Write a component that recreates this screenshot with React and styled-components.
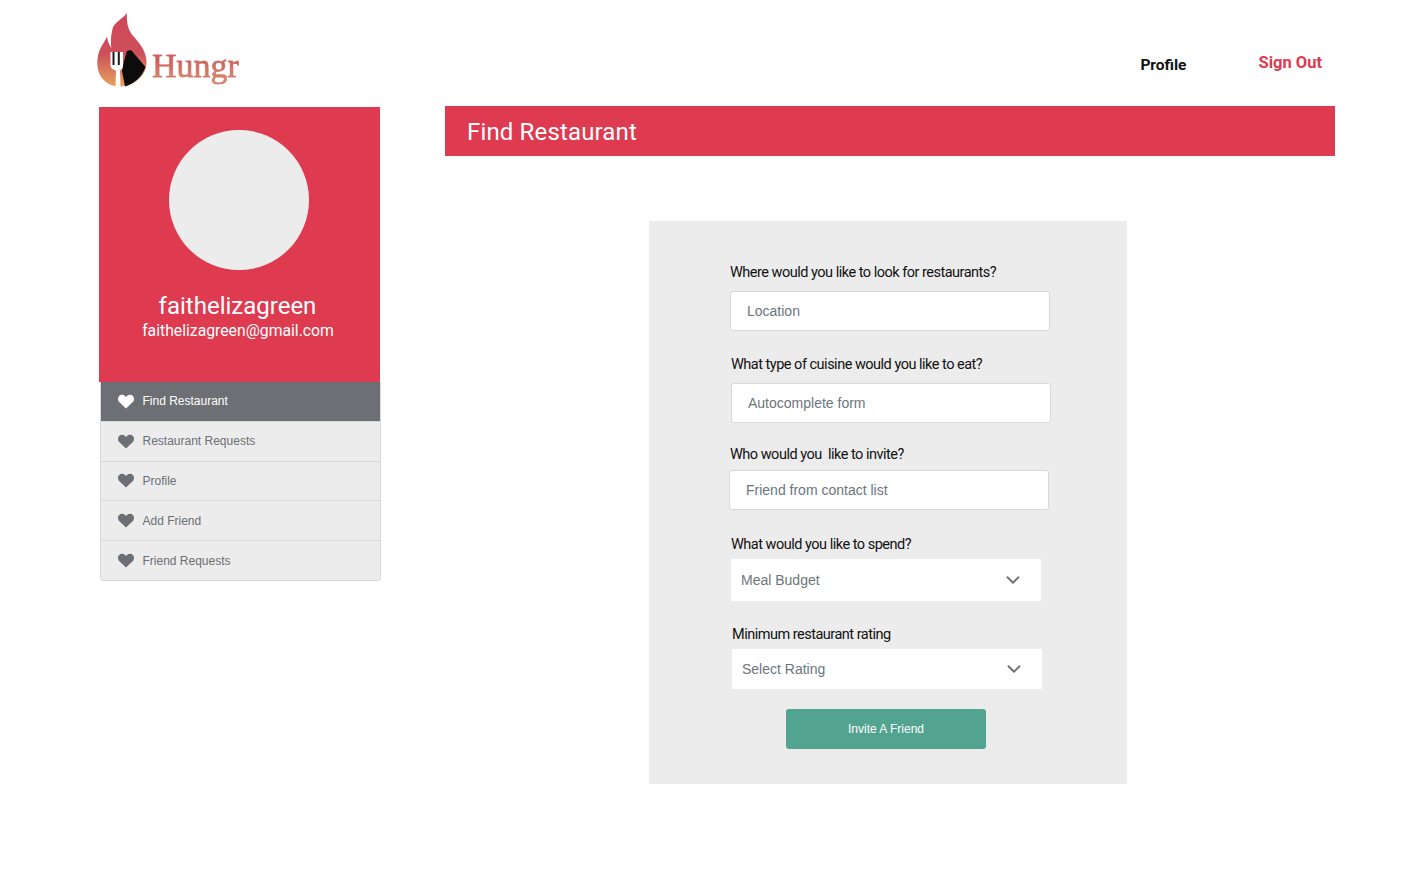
import React from 'react';
import styled, { createGlobalStyle } from 'styled-components';
import { ChevronDown } from 'lucide-react';

const NAV_ITEMS = ['Find Restaurant', 'Restaurant Requests', 'Profile', 'Add Friend', 'Friend Requests'];

const Heart = ({ color }) => (
  <svg width="16" height="15" viewBox="0 0 16 15">
    <path
      fill={color}
      d="M8 14.6 1.4 8.3C-.4 6.5-.4 3.6 1.1 2 2.7.3 5.4.3 7 1.9l1 1 1-1c1.6-1.6 4.3-1.6 5.9.1 1.5 1.6 1.5 4.5-.3 6.3L8 14.6z"
    />
  </svg>
);

const FlameLogo = () => (
  <svg width="50" height="74" viewBox="0 0 50 74">
    <defs>
      <linearGradient id="flame" x1="0" y1="0" x2="0" y2="1">
        <stop offset="0" stopColor="#cf4658" />
        <stop offset="0.55" stopColor="#cd4f5a" />
        <stop offset="1" stopColor="#e6a45c" />
      </linearGradient>
    </defs>
    <path
      fill="url(#flame)"
      d="M30 0C26 6 17 9 15.500 16c-1.500 6-2 13-1.200 19-2-3-3.800-7-4.300-11.500C8 29 2.500 34 .8 44c-1.500 9 .6 18 6 23 4 4 9 6.500 15 6.500C36 73.500 49 64 49.500 50 49.800 41 45 33 38 25c-4-4.500-9-10-8-25z"
    />
    <path fill="#0c0c0c" d="M34 37 48.500 54C45 64 37 71 28 73.500L25 58l2-10 3-10z" />
    <path fill="#fff" d="M13.500 39h12.500v13c0 3-1.500 5-3 5.500l.5 16.500h-5l.5-16.500c-3-.5-5.500-2.500-5.500-5.500z" />
    <path fill="#1a1a1a" d="M15.500 39h2v13h-2zM20.800 39h2v13h-2z" />
  </svg>
);

const App = () => (
  <>
    <GlobalStyle />
    <Header>
      <LogoLink>
        <FlameLogo />
        <LogoWord>Hungr</LogoWord>
      </LogoLink>
      <HeaderNav>
        <ProfileLink>Profile</ProfileLink>
        <SignOut>Sign Out</SignOut>
      </HeaderNav>
    </Header>
    <Page>
      <Sidebar>
        <ProfileCard>
          <Avatar />
          <UserName>faithelizagreen</UserName>
          <UserEmail>faithelizagreen@gmail.com</UserEmail>
        </ProfileCard>
        <NavList>
          {NAV_ITEMS.map((item, index) => (
            <NavItem key={item} $active={index === 0}>
              <Heart color={index === 0 ? '#fff' : '#6c6f73'} />
              {item}
            </NavItem>
          ))}
        </NavList>
      </Sidebar>
      <Main>
        <TitleBar>Find Restaurant</TitleBar>
        <FormPanel>
          <Field $left={81} $top={0}>
            <Label $gap={7}>Where would you like to look for restaurants?</Label>
            <TextInput placeholder="Location" />
          </Field>
          <Field $left={82} $top={23}>
            <Label $gap={7}>What type of cuisine would you like to eat?</Label>
            <TextInput placeholder="Autocomplete form" />
          </Field>
          <Field $left={81} $top={21}>
            <Label $gap={4}>Who would you&nbsp; like to invite?</Label>
            <TextInput $shift={-1} placeholder="Friend from contact list" />
          </Field>
          <Field $left={82} $top={24}>
            <Label $gap={3}>What would you like to spend?</Label>
            <SelectWrap>
              <Select $height={42}>
                <option>Meal Budget</option>
              </Select>
              <Chevron size={22} strokeWidth={2} />
            </SelectWrap>
          </Field>
          <Field $left={83} $top={23}>
            <Label $gap={3}>Minimum restaurant rating</Label>
            <SelectWrap>
              <Select $height={40}>
                <option>Select Rating</option>
              </Select>
              <Chevron size={22} strokeWidth={2} />
            </SelectWrap>
          </Field>
          <InviteButton>Invite A Friend</InviteButton>
        </FormPanel>
      </Main>
    </Page>
  </>
);

const GlobalStyle = createGlobalStyle`
  body {
    margin: 0;
    background: #fff;
    font-family: "Liberation Sans", Arial, sans-serif;
  }
`;

const Header = styled.header`
  display: flex;
  justify-content: space-between;
  height: 106px;
  padding: 13px 102px 0 97px;
  box-sizing: border-box;
`;

const LogoLink = styled.div`
  display: flex;
  align-items: flex-end;
  height: 74px;
`;

const LogoWord = styled.span`
  margin: 0 0 0 5px;
  padding-bottom: 1px;
  font-family: "Liberation Serif", serif;
  font-size: 34px;
  line-height: 40px;
  -webkit-text-stroke: 0.4px #cf6660;
  background: linear-gradient(180deg, #d25a5e 30%, #d98a68 80%);
  background-clip: text;
  color: transparent;
`;

const HeaderNav = styled.nav`
  display: flex;
  align-items: flex-start;
  gap: 72px;
  font-family: Roboto, sans-serif;
  font-weight: 700;
`;

const ProfileLink = styled.a`
  margin-top: 41px;
  font-size: 15.500px;
  line-height: 22px;
  color: #111;
`;

const SignOut = styled.a`
  margin-top: 38px;
  font-size: 16.500px;
  line-height: 24px;
  color: #de3a50;
`;

const Page = styled.div`
  display: flex;
  align-items: flex-start;
  padding-left: 99px;
`;

const Sidebar = styled.aside`
  width: 282px;
  margin-top: 1px;
`;

const ProfileCard = styled.div`
  display: flex;
  flex-direction: column;
  align-items: center;
  width: 281px;
  height: 275px;
  padding-top: 23px;
  box-sizing: border-box;
  background: #de3a50;
  color: #fff;
  font-family: Roboto, sans-serif;
`;

const Avatar = styled.div`
  flex: none;
  width: 140px;
  height: 140px;
  margin-right: 1px;
  border-radius: 50%;
  background: #ececec;
`;

const UserName = styled.div`
  margin: 20px 4px 0 0;
  font-size: 24px;
  line-height: 32px;
`;

const UserEmail = styled.div`
  margin: -1px 3px 0 0;
  font-size: 15.750px;
  line-height: 20px;
`;

const NavList = styled.ul`
  list-style: none;
  margin: 0 0 0 1px;
  padding: 0;
  width: 281px;
  box-sizing: border-box;
  border: 1px solid #d8d8d8;
  border-top: 0;
  border-radius: 0 0 4px 4px;
  overflow: hidden;
  background: #ececec;
`;

const NavItem = styled.li`
  display: flex;
  align-items: center;
  gap: 9px;
  height: 39.800px;
  padding-left: 16.500px;
  box-sizing: border-box;
  border-bottom: 1px solid #d8d8d8;
  font-size: 12px;
  background: ${(p) => (p.$active ? '#6c6f73' : 'transparent')};
  color: ${(p) => (p.$active ? '#fff' : '#6c6f73')};

  &:last-child {
    height: 39px;
    border-bottom: 0;
  }
`;

const Main = styled.main`
  width: 890px;
  margin-left: 64px;
`;

const TitleBar = styled.h1`
  margin: 0;
  height: 50px;
  padding-left: 22px;
  background: #de3a50;
  color: #fff;
  font-family: Roboto, sans-serif;
  font-size: 24px;
  font-weight: 400;
  line-height: 52px;
  letter-spacing: 0.15px;
`;

const FormPanel = styled.form`
  display: flex;
  flex-direction: column;
  width: 478px;
  margin: 65px 0 0 204px;
  padding: 41px 0 35px;
  box-sizing: border-box;
  background: #ececec;
`;

const Field = styled.div`
  display: flex;
  flex-direction: column;
  margin-left: ${(p) => p.$left}px;
  margin-top: ${(p) => p.$top}px;
`;

const Label = styled.label`
  margin-bottom: ${(p) => p.$gap}px;
  font-family: Roboto, sans-serif;
  font-size: 14.500px;
  line-height: 22px;
  letter-spacing: -0.5px;
  color: #111;
`;

const TextInput = styled.input`
  width: 320px;
  height: 40px;
  margin-left: ${(p) => p.$shift || 0}px;
  padding: 0 16px;
  box-sizing: border-box;
  border: 1px solid #d8d8d8;
  border-radius: 3px;
  background: #fff;
  font-family: "Liberation Sans", Arial, sans-serif;
  font-size: 14px;

  &::placeholder {
    color: #6c757d;
    opacity: 1;
  }
`;

const SelectWrap = styled.div`
  position: relative;
  width: 310px;
`;

const Select = styled.select`
  display: block;
  appearance: none;
  width: 100%;
  height: ${(p) => p.$height}px;
  padding: 0 10px;
  border: 0;
  border-radius: 0;
  background: #fff;
  color: #6c757d;
  font-family: "Liberation Sans", Arial, sans-serif;
  font-size: 14px;
`;

const Chevron = styled(ChevronDown)`
  position: absolute;
  top: 50%;
  right: 17px;
  transform: translateY(-50%);
  color: #6c6f73;
`;

const InviteButton = styled.button`
  align-self: flex-start;
  width: 200px;
  height: 40px;
  margin: 20px 0 0 137px;
  border: 0;
  border-radius: 3px;
  background: #52a390;
  color: #fff;
  font-family: "Liberation Sans", Arial, sans-serif;
  font-size: 12px;
`;

export default App;
